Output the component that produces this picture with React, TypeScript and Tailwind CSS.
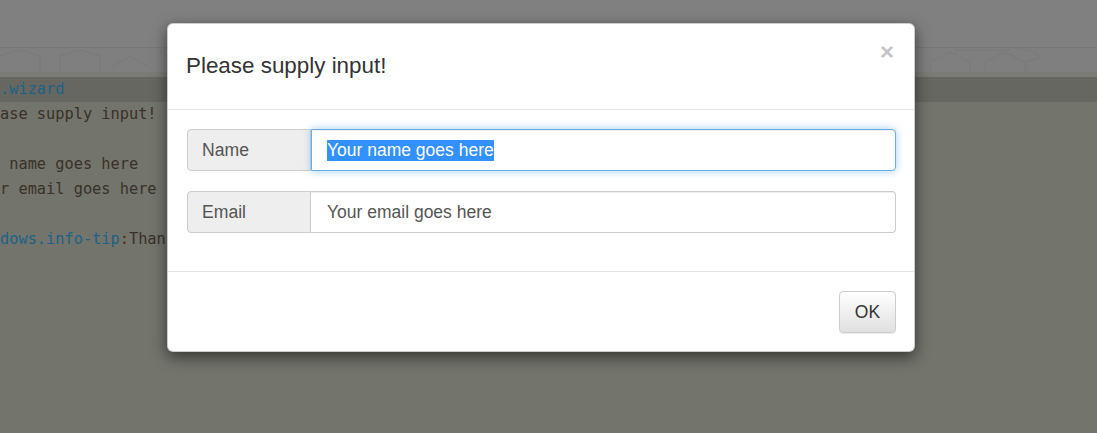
import React from "react";

const mono = { fontFamily: '"DejaVu Sans Mono", "Liberation Mono", monospace' };

export default function App() {
  return (
    <div className="relative w-[1097px] h-[433px] overflow-hidden bg-[#73746c]" style={{ fontFamily: '"Liberation Sans", Arial, sans-serif' }}>
      {/* background page (dimmed) */}
      <div className="flex flex-col">
        <div className="h-[47px] bg-[#808080]" />
        <div className="h-[1px] bg-[#787878]" />
        <div className="h-[24px] bg-[#7f7f7f] overflow-hidden">
          <svg width="1097" height="24" viewBox="0 0 1097 24" fill="none" stroke="#7b7b7b" strokeWidth="1.2">
            <path d="M0 8 L20 2 L40 8 L40 24 M60 24 L60 8 L80 2 L100 8 L100 24" />
            <path d="M930 24 L930 14 L950 4 L970 14 L970 24 M985 24 L985 14 L1005 4 L1025 14 L1025 24" />
            <path d="M955 2 L1010 2 M1015 0 L1035 4 L1040 10 L1025 14 L1028 24" />
            <path d="M110 20 L130 8 L150 20 M160 4 L175 10" />
          </svg>
        </div>
        <div className="h-[5px] bg-[#7a7b74]" />
        <div className="h-[25px] bg-[#666760] leading-[25px] text-[15.3px] text-[#1d6287] whitespace-pre" style={mono}>.wizard</div>
        <div className="text-[15.3px] leading-[25px] text-[#3a3128] whitespace-pre" style={mono}>
          <div>ase supply input!</div>
          <div>&nbsp;</div>
          <div> name goes here</div>
          <div>r email goes here</div>
          <div>&nbsp;</div>
          <div>
            <span className="text-[#1d6287]">dows.info-tip</span>
            <span className="text-[#5a2a22]">:</span>
            <span>Thanks</span>
          </div>
        </div>
      </div>

      {/* modal */}
      <div className="absolute left-[167px] top-[23px] w-[748px] bg-white rounded-[6px] border border-[rgba(0,0,0,0.2)] shadow-[0_5px_15px_rgba(0,0,0,0.55)]">
        <div className="relative pl-[18px] pr-[18px] pt-[29px] pb-[31px] border-b border-[#e5e5e5]">
          <h4 className="text-[22.4px] leading-[25px] text-[#333333] m-0">Please supply input!</h4>
          <span className="absolute right-[20px] top-[16px] text-[24px] font-bold leading-[24px] text-[#c4c4c4]">×</span>
        </div>
        <div className="pl-[19px] pr-[18px] pt-[19px] pb-[38px] flex flex-col gap-[20px]">
          <div className="flex h-[42px]">
            <div className="w-[124px] shrink-0 bg-[#eeeeee] border border-[#cccccc] rounded-l-[4px] flex items-center pl-[14px] text-[17.6px] text-[#555555]">Name</div>
            <div className="flex-1 border border-[#66afe9] rounded-r-[4px] flex items-center pl-[15px] shadow-[inset_0_1px_1px_rgba(0,0,0,0.075),0_0_8px_rgba(102,175,233,0.6)]">
              <span className="bg-[#3390ff] text-white text-[17.5px] leading-[21px]">Your name goes here</span>
            </div>
          </div>
          <div className="flex h-[42px]">
            <div className="w-[124px] shrink-0 bg-[#eeeeee] border border-[#cccccc] rounded-l-[4px] flex items-center pl-[14px] text-[17.6px] text-[#555555]">Email</div>
            <div className="flex-1 border border-l-0 border-[#cccccc] rounded-r-[4px] flex items-center pl-[16px] text-[17.5px] text-[#555555] shadow-[inset_0_1px_1px_rgba(0,0,0,0.075)]">Your email goes here</div>
          </div>
        </div>
        <div className="border-t border-[#e5e5e5] pl-[19px] pr-[18px] pt-[19px] pb-[18px] flex justify-end">
          <button className="w-[57px] h-[42px] rounded-[4px] border border-[#cccccc] bg-gradient-to-b from-white to-[#e0e0e0] text-[17.5px] text-[#333333] shadow-[inset_0_1px_0_rgba(255,255,255,0.15),0_1px_1px_rgba(0,0,0,0.075)]">OK</button>
        </div>
      </div>
    </div>
  );
}
